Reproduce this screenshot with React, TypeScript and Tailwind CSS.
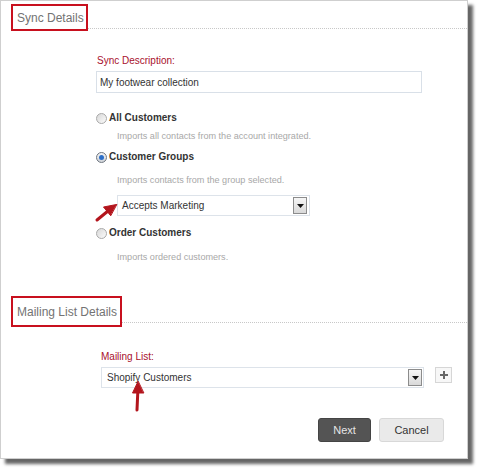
import React from 'react';

const font = { fontFamily: '"Liberation Sans", Arial, sans-serif' };

function Radio({ checked }: { checked?: boolean }) {
  return checked ? (
    <span className="w-[11px] h-[11px] rounded-full border border-[#6f7680] bg-gradient-to-b from-[#f4f4f4] to-[#cfd3d8] flex items-center justify-center shrink-0">
      <span className="w-[5px] h-[5px] rounded-full bg-[#2d6fc8]" />
    </span>
  ) : (
    <span className="w-[11px] h-[11px] rounded-full border border-[#a9a9a9] bg-gradient-to-br from-[#d8d8d8] to-[#fbfbfb] shrink-0" />
  );
}

function DropButton() {
  return (
    <span className="w-[14px] h-[17px] border border-[#8c8c8c] bg-gradient-to-b from-[#f6f6f6] to-[#d9d9d9] flex items-center justify-center">
      <svg width="7" height="4" viewBox="0 0 7 4">
        <path d="M0 0h7L3.5 4z" fill="#111" />
      </svg>
    </span>
  );
}

function SectionHeader({ title, width, height, line }: { title: string; width: number; height: number; line: number }) {
  return (
    <div className="flex items-start">
      <div
        className="border-2 border-[#c8101e] flex items-center pl-[4px] text-[12px] text-[#737373] shrink-0"
        style={{ width, height }}
      >
        {title}
      </div>
      <div className="flex-1 border-b border-dotted border-[#c8c8c8]" style={{ height: line }} />
    </div>
  );
}

function Option({ label, checked }: { label: string; checked?: boolean }) {
  return (
    <div className="flex items-center gap-[2px] h-[12px]">
      <Radio checked={checked} />
      <span className="text-[10px] font-bold text-[#333] leading-[12px]">{label}</span>
    </div>
  );
}

export default function App() {
  return (
    <div className="w-[480px] h-[475px] bg-white relative" style={font}>
      <div className="w-[468px] h-[459px] border border-[#cfcfcf] bg-white shadow-[5px_5px_3px_rgba(0,0,0,0.6)] flex flex-col pl-[10px]">
        {/* Sync Details */}
        <div className="mt-[3px]">
          <SectionHeader title="Sync Details" width={77} height={27} line={25} />
        </div>

        <div className="ml-[85px] w-[326px] flex flex-col">
          <div className="mt-[24px] pl-[1px] h-[12px] leading-[12px] text-[10px] text-[#a8102c]">Sync Description:</div>
          <div className="mt-[4px] h-[22px] border border-[#d9e0e8] flex items-center pl-[3px] text-[10px] text-[#333]">
            My footwear collection
          </div>

          <div className="mt-[19px]">
            <Option label="All Customers" />
          </div>
          <div className="mt-[6px] pl-[21px] h-[12px] leading-[12px] text-[9.1px] text-[#a8a8a8]">
            Imports all contacts from the account integrated.
          </div>

          <div className="mt-[9px]">
            <Option label="Customer Groups" checked />
          </div>
          <div className="mt-[11px] pl-[21px] h-[12px] leading-[12px] text-[9.1px] text-[#a8a8a8]">
            Imports contacts from the group selected.
          </div>

          <div className="mt-[9px] ml-[21px] w-[193px] h-[21px] border border-[#dde3ea] flex items-center justify-between pl-[4px] pr-[2px] text-[10px] text-[#333]">
            <span>Accepts Marketing</span>
            <DropButton />
          </div>

          <div className="mt-[11px]">
            <Option label="Order Customers" />
          </div>
          <div className="mt-[12px] pl-[21px] h-[12px] leading-[12px] text-[9.1px] text-[#a8a8a8]">
            Imports ordered customers.
          </div>
        </div>

        {/* Mailing List Details */}
        <div className="mt-[33px]">
          <SectionHeader title="Mailing List Details" width={111} height={31} line={27} />
        </div>

        <div className="ml-[90px] flex flex-col">
          <div className="mt-[24px] h-[12px] leading-[12px] text-[10px] text-[#a8102c]">Mailing List:</div>
          <div className="mt-[4px] flex items-start gap-[11px]">
            <div className="w-[323px] h-[21px] border border-[#dde3ea] flex items-center justify-between pl-[5px] pr-[1px] text-[10px] text-[#333]">
              <span>Shopify Customers</span>
              <DropButton />
            </div>
            <div className="w-[17px] h-[16px] border border-[#d6d6d6] bg-[#f7f7f7] flex items-center justify-center">
              <svg width="8" height="8" viewBox="0 0 8 8">
                <path d="M3 0h2v3h3v2H5v3H3V5H0V3h3z" fill="#666" />
              </svg>
            </div>
          </div>
        </div>

        <div className="mt-[30px] flex justify-end gap-[8px] pr-[23px]">
          <button className="w-[53px] h-[24px] rounded-[3px] bg-[#545454] border border-[#444] text-[11px] text-[#e6e6e6]">
            Next
          </button>
          <button className="w-[65px] h-[24px] rounded-[3px] bg-[#eaeaea] border border-[#d8d8d8] text-[11px] text-[#333]">
            Cancel
          </button>
        </div>
      </div>

      {/* annotation arrows */}
      <svg className="absolute inset-0 pointer-events-none" width="480" height="475" viewBox="0 0 480 475">
        <g stroke="#b3151d" strokeWidth="3" strokeLinecap="round" fill="#b3151d">
          <line x1="97" y1="220" x2="108" y2="211" />
          <path d="M116.5 204.5 L103.5 207 L110.5 215.5 Z" strokeWidth="1" strokeLinejoin="round" />
          <line x1="137" y1="410" x2="137.8" y2="392" />
          <path d="M138 381.5 L132.5 393 L143.5 393 Z" strokeWidth="1" strokeLinejoin="round" />
        </g>
      </svg>
    </div>
  );
}
